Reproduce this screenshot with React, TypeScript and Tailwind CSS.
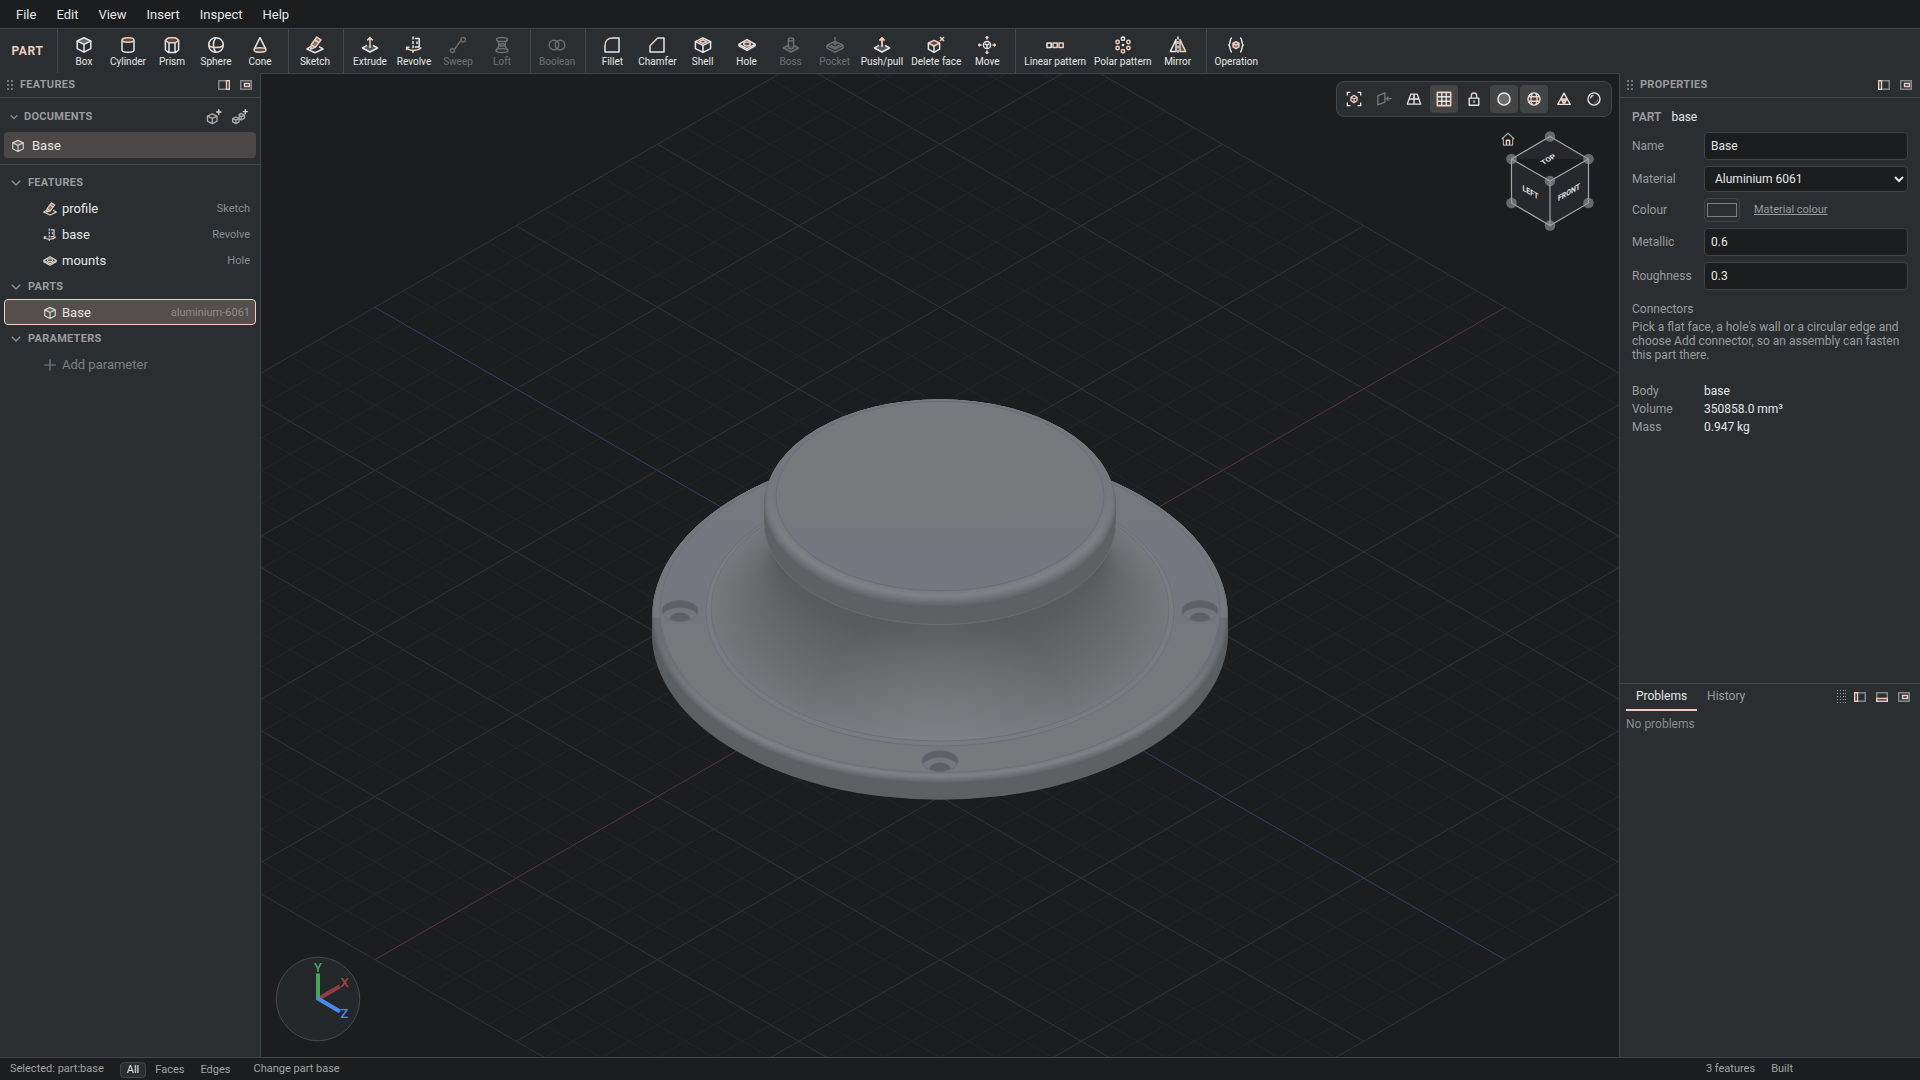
import type { ReactNode } from "react";

const ACCENT = "#efcdbe";

type IconProps = { size?: number; className?: string; children: ReactNode };

function Icon({ size = 18, className = "", children }: IconProps) {
  return (
    <svg
      width={size}
      height={size}
      viewBox="0 0 18 18"
      fill="none"
      stroke="currentColor"
      strokeWidth="1.5"
      strokeLinejoin="round"
      className={`shrink-0 ${className}`}
      aria-hidden="true"
    >
      {children}
    </svg>
  );
}

const cube = (
  <>
    <path d="M9 1.8 15.8 5 9 8.4 2.2 5Z" fill="#6d6765" />
    <path d="M2.2 5v7.6L9 16.2l6.8-3.6V5M9 8.4v7.8" />
  </>
);

const sketch = (
  <>
    <path d="M5 10.4 1 13 9 16.8l8-3.8-4-2.4" />
    <path d="M4.8 13 5.2 8.8 10.8 1l4.2 2.8-5.6 7.6Z" stroke={ACCENT} fill="#8a7468" />
    <path d="m5.4 8.8 4 2.6M9 4l4 2.6" stroke={ACCENT} />
  </>
);

const revolve = (
  <>
    <path d="M8 .5v17" strokeDasharray="3 1.4" />
    <path d="M9.8 2.4h4.4V11H9.8M12 5.4v2.6" />
    <path d="M2 11.4c1 3.8 10.6 4.2 14.4.2M1.6 14.2v-3h3" stroke={ACCENT} />
  </>
);

const hole = (
  <>
    <path d="M9 3.6 17 8.2v1.6l-8 4.6L1 9.8V8.2Z" />
    <path d="M1 8.4 9 12.6l8-4.2" />
    <ellipse cx="9" cy="8" rx="3.4" ry="1.9" stroke={ACCENT} fill="#5b4c45" />
  </>
);

const slab = <path d="M6 9.4 1.4 12 9 16l7.6-4L12 9.4" fill="#55585a" />;

const toolIcons: Record<string, ReactNode> = {
  Box: cube,
  Cylinder: (
    <>
      <path d="M3 4v10c0 3 12 3 12 0V4" />
      <ellipse cx="9" cy="4" rx="6" ry="2.2" stroke={ACCENT} fill="#5b4c45" />
    </>
  ),
  Prism: (
    <>
      <path d="M2.4 4v10l3 2.4h7.2l3-2.4V4M6 7v9M12 7v9" />
      <path d="M5.4 1.8h7.2l3 2.4-3 2.6H5.4l-3-2.6Z" stroke={ACCENT} fill="#5b4c45" />
    </>
  ),
  Sphere: (
    <>
      <circle cx="9" cy="9" r="7.3" />
      <path d="M9 1.8c-3.4 3-3.4 11.4 0 14.4" />
      <path d="M1.8 9c2 3.4 12.4 3.4 14.4 0" stroke={ACCENT} />
    </>
  ),
  Cone: (
    <>
      <path d="M3 13.6 9 1.6l6 12" />
      <ellipse cx="9" cy="14" rx="6" ry="2.2" stroke={ACCENT} fill="#5b4c45" />
    </>
  ),
  Sketch: sketch,
  Extrude: (
    <>
      {slab}
      <path d="M9 12V1.6M6.2 4.4 9 1.6l2.8 2.8" stroke={ACCENT} />
    </>
  ),
  Revolve: revolve,
  Sweep: (
    <>
      <path d="M4.6 13.6C8.4 12 8.4 6.4 12.6 4.6" />
      <circle cx="3.4" cy="14.4" r="2" stroke={ACCENT} />
      <circle cx="14.2" cy="3.8" r="2.2" stroke={ACCENT} />
    </>
  ),
  Loft: (
    <>
      <ellipse cx="9" cy="3.4" rx="5.4" ry="2" />
      <ellipse cx="9" cy="14.6" rx="6" ry="2" />
      <ellipse cx="9" cy="9" rx="2.8" ry="1.2" />
      <path d="M3.8 4c3 3 3 6.4-.6 10.2M14.2 4c-3 3-3 6.4.6 10.2" />
    </>
  ),
  Boolean: (
    <>
      <circle cx="6" cy="9" r="4.8" />
      <circle cx="12" cy="9" r="4.8" />
    </>
  ),
  Fillet: (
    <>
      <path d="M9 2h7v14H2V9.6" />
      <path d="M2 10c0-5 3-8 7.4-8" stroke={ACCENT} />
    </>
  ),
  Chamfer: (
    <>
      <path d="M9.4 2H16v14H2V9.6" />
      <path d="M2 9.8 9.6 2" stroke={ACCENT} />
    </>
  ),
  Shell: (
    <>
      <path d="M1.4 5.6v7L9 16.4l7.6-3.8v-7M9 9.4v7" />
      <path d="M9 1.8 16.6 5.6 9 9.4 1.4 5.6Z" />
      <path d="M9 3.8 12.8 5.6 9 7.4 5.2 5.6Z" stroke={ACCENT} fill="#5b4c45" />
    </>
  ),
  Hole: hole,
  Boss: (
    <>
      {slab}
      <path d="M6.4 3.6v7.6c0 1.6 5.2 1.6 5.2 0V3.6" />
      <ellipse cx="9" cy="3.4" rx="2.6" ry="1.5" />
    </>
  ),
  Pocket: (
    <>
      <path d="M9 5.4 17 9.2 9 13 1 9.2Z" />
      <path d="M1 9.4v2.8l8 4 8-4V9.4M4.6 9.2 9 11.4l4.4-2.2" />
      <path d="M9 1v7.4M7 6.6l2 2 2-2" stroke={ACCENT} />
    </>
  ),
  "Push/pull": (
    <>
      {slab}
      <path d="M9 11V3M6.4 4.6 9 2l2.6 2.6" stroke={ACCENT} strokeWidth="1.8" />
    </>
  ),
  "Delete face": (
    <>
      <path d="M7 4.4 12.6 7 7 10 1.4 7Z" stroke={ACCENT} fill="#5b4c45" />
      <path d="M1.4 7v6.2L7 16.4l5.6-3.2V7M7 10v6.4" />
      <path d="m13 1 4 4M17 1l-4 4" stroke={ACCENT} />
    </>
  ),
  Move: (
    <>
      <circle cx="9" cy="9" r="3.6" />
      <path d="M6.6 7.8 9 9l2.4-1.2M9 9v3" />
      <path
        d="M9 .6v3M9 14.4v3M.6 9h3M14.4 9h3M7.6 2 9 .6 10.4 2M7.6 16 9 17.4 10.4 16M2 7.6.6 9 2 10.4M16 7.6 17.4 9 16 10.4"
        stroke={ACCENT}
      />
    </>
  ),
  "Linear pattern": (
    <>
      <path d="M1 7h4.2v4.4H1z" />
      <path d="M7 7h4.2v4.4H7zM13 7h4.2v4.4H13z" stroke={ACCENT} />
    </>
  ),
  "Polar pattern": (
    <>
      <circle cx="9" cy="2.8" r="1.7" />
      <circle cx="3.6" cy="6" r="1.7" stroke={ACCENT} />
      <circle cx="14.4" cy="6" r="1.7" stroke={ACCENT} />
      <circle cx="3.6" cy="12" r="1.7" stroke={ACCENT} />
      <circle cx="14.4" cy="12" r="1.7" stroke={ACCENT} />
      <circle cx="9" cy="15.2" r="1.7" stroke={ACCENT} />
      <circle cx="9" cy="9" r=".6" />
    </>
  ),
  Mirror: (
    <>
      <path d="M7 3.6v11.8H1.4Z" />
      <path d="M11 3.6v11.8h5.6Z" stroke={ACCENT} fill="#5b4c45" />
      <path d="M9 .6v17" strokeDasharray="3 1.4" />
    </>
  ),
  Operation: (
    <>
      <path d="M5 2C2.4 2 3.8 8 1.8 9 3.8 10 2.4 16 5 16M13 2c2.6 0 1.2 6 3.2 7-2 1-.6 7-3.2 7" />
      <path
        d="M9 5.6 12 7.2v3.6l-3 1.8-3-1.8V7.2ZM6 7.2 9 9l3-1.8"
        stroke={ACCENT}
        fill="#8a7468"
      />
    </>
  ),
};

const toolGroups: string[][] = [
  ["Box", "Cylinder", "Prism", "Sphere", "Cone"],
  ["Sketch"],
  ["Extrude", "Revolve", "Sweep", "Loft"],
  ["Boolean"],
  ["Fillet", "Chamfer", "Shell", "Hole", "Boss", "Pocket", "Push/pull", "Delete face", "Move"],
  ["Linear pattern", "Polar pattern", "Mirror"],
  ["Operation"],
];

const disabledTools = ["Sweep", "Loft", "Boolean", "Boss", "Pocket"];

function MenuBar() {
  return (
    <nav className="flex h-[29px] shrink-0 items-center border-b border-[#434647] pt-0.5 pl-1.5">
      {["File", "Edit", "View", "Insert", "Inspect", "Help"].map((item) => (
        <button key={item} type="button" className="px-2.5 text-[13px] leading-5">
          {item}
        </button>
      ))}
    </nav>
  );
}

function Toolbar() {
  return (
    <div className="flex h-11 shrink-0 bg-[#2a2e30]">
      <div className="flex w-[58px] items-center justify-center border-r border-[#434647] pr-0.5 text-xs font-bold tracking-wider text-[#efcdbe]">
        PART
      </div>
      {toolGroups.map((group) => (
        <div
          key={group[0]}
          className="flex border-r border-[#434647] pr-1.5 pl-1 last:border-r-0"
        >
          {group.map((tool) => (
            <button
              key={tool}
              type="button"
              disabled={disabledTools.includes(tool)}
              className="flex min-w-11 flex-col items-center px-1 pt-[7px] disabled:opacity-35"
            >
              <Icon>{toolIcons[tool]}</Icon>
              <span className="text-[10px] leading-4 whitespace-nowrap">{tool}</span>
            </button>
          ))}
        </div>
      ))}
    </div>
  );
}

function Grip() {
  return (
    <svg width="6" height="10" viewBox="0 0 6 10" fill="#77797a" aria-hidden="true">
      {[0, 4, 8].map((y) => (
        <path key={y} d={`M0 ${y}h2v2H0zM4 ${y}h2v2H4z`} />
      ))}
    </svg>
  );
}

function DockIcon({ side }: { side: "left" | "right" | "bottom" | "float" }) {
  const insets = {
    left: "M.5 .5h3v9h-3z",
    right: "M8.5 .5h3v9h-3z",
    bottom: "M.5 6.5h11v3h-11z",
    float: "M4.5 3.5h5v3h-5z",
  };
  return (
    <svg width="12" height="10" viewBox="0 0 12 10" fill="none" aria-hidden="true">
      <path d="M.75 .75h10.5v8.5H.75z" stroke="#858889" strokeWidth="1.5" />
      <path d={insets[side]} stroke={ACCENT} strokeWidth="1.4" />
    </svg>
  );
}

function PanelHeader({ title, side }: { title: string; side: "left" | "right" }) {
  return (
    <header className="flex h-[25px] shrink-0 items-center border-b border-[#434647] pr-2 pl-[7px]">
      <Grip />
      <h2 className="ml-[7px] flex-1 pt-px text-[11px] font-bold tracking-wide text-[#9b9c9d]">
        {title}
      </h2>
      <div className="flex gap-2.5">
        <button type="button" aria-label="Dock panel">
          <DockIcon side={side} />
        </button>
        <button type="button" aria-label="Float panel">
          <DockIcon side="float" />
        </button>
      </div>
    </header>
  );
}

function Chevron({ size }: { size: number }) {
  return (
    <svg
      width={size}
      height={size}
      viewBox="0 0 10 10"
      fill="none"
      stroke="#8d8f90"
      strokeWidth="1.4"
      aria-hidden="true"
    >
      <path d="m.8 2.8 4.2 4.2 4.2-4.2" />
    </svg>
  );
}

function TreeHeading({ children }: { children: ReactNode }) {
  return (
    <button
      type="button"
      className="flex h-[26px] items-center gap-[7px] pt-0.5 pl-[11px] text-[11px] font-bold tracking-wide text-[#9b9c9d]"
    >
      <Chevron size={10} />
      {children}
    </button>
  );
}

type TreeRowProps = { icon: ReactNode; name: string; kind: string; selected?: boolean };

function TreeRow({ icon, name, kind, selected }: TreeRowProps) {
  return (
    <button
      type="button"
      className={`mx-1 flex h-[26px] items-center rounded border pt-0.5 pr-[5px] pl-[38px] ${
        selected ? "border-[#efcdbe] bg-[#544e4c]" : "border-transparent"
      }`}
    >
      <Icon size={14} className="text-[#d2d2d2]">
        {icon}
      </Icon>
      <span className="ml-[5px] flex-1 text-left text-[13px]">{name}</span>
      <span className="text-[11px] text-[#8b8d8e]">{kind}</span>
    </button>
  );
}

function FeaturesPanel() {
  return (
    <aside className="flex w-[260px] shrink-0 flex-col bg-[#2a2e30]">
      <PanelHeader title="FEATURES" side="right" />
      <section className="flex flex-col border-b border-[#434647] pt-1 pb-1.5">
        <div className="flex h-[30px] items-center pr-3 pl-2.5">
          <button
            type="button"
            className="flex flex-1 items-center gap-1.5 text-[11px] font-bold tracking-wide text-[#9b9c9d]"
          >
            <Chevron size={8} />
            DOCUMENTS
          </button>
          <div className="flex gap-2.5 text-[#a9abac]">
            <button type="button" aria-label="New part">
              <Icon size={16}>
                <path d="M7 5.4 12.4 8v5.6L7 16.6l-5.4-3V8ZM1.6 8 7 10.6 12.4 8M7 10.6v6" />
                <path d="M14.4 .4v6M11.4 3.4h6" stroke={ACCENT} />
              </Icon>
            </button>
            <button type="button" aria-label="New assembly">
              <Icon size={16}>
                <path d="M4.4 9 8 10.8v3.6l-3.6 2-3.6-2v-3.6ZM.8 10.8l3.6 1.8L8 10.8M4.4 12.6v3.8" />
                <path d="m10.4 5 3.6 1.8v3.6l-3.6 2L8 11V6.4ZM7.6 7l2.8 1.6L14 6.8M10.4 8.600v3.8" />
                <path d="M15 .2v5.6M12.2 3h5.6" stroke={ACCENT} />
              </Icon>
            </button>
          </div>
        </div>
        <button
          type="button"
          className="mx-1 flex h-[26px] items-center gap-[7px] rounded bg-[#4b4747] pt-px pl-[7px] text-[13px]"
        >
          <Icon size={14} className="text-[#d2d2d2]">
            {cube}
          </Icon>
          Base
        </button>
      </section>
      <section className="flex flex-col pt-1">
        <TreeHeading>FEATURES</TreeHeading>
        <TreeRow icon={sketch} name="profile" kind="Sketch" />
        <TreeRow icon={revolve} name="base" kind="Revolve" />
        <TreeRow icon={hole} name="mounts" kind="Hole" />
        <TreeHeading>PARTS</TreeHeading>
        <TreeRow icon={cube} name="Base" kind="aluminium-6061" selected />
        <TreeHeading>PARAMETERS</TreeHeading>
        <button
          type="button"
          className="flex h-[26px] items-center gap-[5px] pt-0.5 pl-[43px] text-[13px] text-[#7d8081]"
        >
          <Icon size={14}>
            <path d="M9 1.5v15M1.5 9h15" />
          </Icon>
          Add parameter
        </button>
      </section>
    </aside>
  );
}

// Isometric floor: 20 cells each way from the origin, a strong line every 5.
const CELL_X = 28.25;
const CELL_Y = 16.31;
const HALF = 20;

function isoPoint(u: number, v: number) {
  return [(u - v) * CELL_X, (u + v) * CELL_Y];
}

function gridPath(major: boolean) {
  let d = "";
  for (let i = -HALF; i <= HALF; i++) {
    if (i === 0 || (i % 5 === 0) !== major) continue;
    d += `M${isoPoint(i, -HALF)}L${isoPoint(i, HALF)}M${isoPoint(-HALF, i)}L${isoPoint(HALF, i)}`;
  }
  return d;
}

function mix(from: number[], to: number[], t: number) {
  return `rgb(${from.map((c, i) => Math.round(c + (to[i] - c) * t)).join(",")})`;
}

type Ring = { r: number; y: number; fill: string };

const SQUASH = 0.5774;
const FACE = [117, 121, 124];
const BRIGHT = [127, 131, 135];
const WALL = [93, 97, 100];

// A rounded edge, listed from its wall up to its flat face.
function roundedEdge(r: number, y: number, radius: number): Ring[] {
  const steps = 14;
  return Array.from({ length: steps + 1 }, (_, i) => {
    const t = i / steps;
    const a = (t * Math.PI) / 2;
    return {
      r: r - radius * (1 - Math.cos(a)),
      y: y - radius * 0.816 * Math.sin(a),
      fill: t < 0.6 ? mix(WALL, BRIGHT, t / 0.6) : mix(BRIGHT, FACE, (t - 0.6) / 0.4),
    };
  });
}

// The concave sweep from the flange up to the neck.
function flare(): Ring[] {
  const steps = 60;
  return Array.from({ length: steps + 1 }, (_, i) => {
    const t = i / steps;
    const a = (t * Math.PI) / 2;
    return {
      r: 229 - 64 * Math.sin(a),
      y: -24.4 - 67 * (1 - Math.cos(a)),
      fill: mix([117, 121, 125], [90, 91, 93], t),
    };
  });
}

function Rings({ rings }: { rings: Ring[] }) {
  return rings.map((ring, i) => (
    <ellipse key={i} cx="0" cy={ring.y} rx={ring.r} ry={ring.r * SQUASH} fill={ring.fill} />
  ));
}

function wallPath(r: number, top: number, bottom: number) {
  const ry = r * SQUASH;
  return `M${-r} ${top}V${bottom}A${r} ${ry} 0 0 0 ${r} ${bottom}V${top}Z`;
}

function MountHole({ x, y }: { x: number; y: number }) {
  return (
    <g transform={`translate(${x} ${y})`}>
      <ellipse rx="18.2" ry="10.5" fill="#5d6165" />
      <g clipPath="url(#bore)">
        <ellipse cy="7" rx="18.2" ry="10.5" fill="#74787c" stroke="#696d73" strokeWidth=".6" />
        <ellipse cy="7.5" rx="10.2" ry="6" fill="#5d6165" />
      </g>
      <ellipse rx="18.2" ry="10.5" stroke="#6a6d76" strokeWidth=".7" fill="none" />
    </g>
  );
}

function Scene() {
  return (
    <svg
      viewBox="-679 -559.5 1358 983"
      preserveAspectRatio="xMidYMid slice"
      className="block h-full w-full"
      role="img"
      aria-label="Model view"
    >
      <defs>
        <clipPath id="bore">
          <ellipse rx="18.2" ry="10.5" />
        </clipPath>
        <linearGradient id="topFace" gradientUnits="userSpaceOnUse" x1="0" y1="-235" x2="0" y2="-40">
          <stop offset="0" stopColor="#767a7c" />
          <stop offset=".6" stopColor="#75797c" />
          <stop offset=".7" stopColor="#74777f" />
          <stop offset="1" stopColor="#74777f" />
        </linearGradient>
        <linearGradient id="flange" gradientUnits="userSpaceOnUse" x1="0" y1="-160" x2="0" y2="140">
          <stop offset="0" stopColor="#75797d" />
          <stop offset=".2" stopColor="#74777f" />
          <stop offset=".46" stopColor="#74777f" />
          <stop offset=".54" stopColor="#75797c" />
          <stop offset="1" stopColor="#75797b" />
        </linearGradient>
        <linearGradient id="backFade" x1="0" x2="0" y1="0" y2="1">
          <stop offset="0" stopColor="#74787c" />
          <stop offset=".42" stopColor="#74787c" />
          <stop offset=".72" stopColor="#74787c" stopOpacity="0" />
        </linearGradient>
        <linearGradient id="sides" x1="0" x2="1" y1="0" y2="0">
          <stop offset="0" stopColor="#53575a" stopOpacity=".8" />
          <stop offset=".14" stopColor="#5d6164" stopOpacity="0" />
          <stop offset=".86" stopColor="#5d6164" stopOpacity="0" />
          <stop offset="1" stopColor="#53575a" stopOpacity=".8" />
        </linearGradient>
        <radialGradient id="sheen" gradientUnits="userSpaceOnUse" cx="0" cy="118" r="140">
          <stop offset="0" stopColor="#82868a" stopOpacity=".75" />
          <stop offset="1" stopColor="#82868a" stopOpacity="0" />
        </radialGradient>
      </defs>

      <path d={gridPath(false)} stroke="#242628" />
      <path d={gridPath(true)} stroke="#303335" />
      <path d={`M${isoPoint(0, -HALF)}L${isoPoint(0, HALF)}`} stroke="#553437" />
      <path d={`M${isoPoint(-HALF, 0)}L${isoPoint(HALF, 0)}`} stroke="#2b4266" />

      <path d={wallPath(288, -16, 0)} fill="#5d6164" />
      <Rings rings={roundedEdge(288, -16, 8)} />
      <ellipse cy="-20.5" rx="286" ry="165" fill="url(#backFade)" />
      <path d={wallPath(288, -16, 0)} fill="url(#sides)" opacity=".5" />
      <ellipse cy="-22.5" rx="280" ry="161.7" fill="url(#flange)" stroke="#6a6d7a" strokeWidth=".8" />
      <ellipse cy="-22.5" rx="234" ry="135" fill="#787c80" stroke="#696c78" strokeWidth=".8" />
      <Rings rings={flare()} />
      <ellipse cy="-24.4" rx="229" ry="132" fill="url(#sheen)" stroke="#696c78" strokeWidth=".8" />

      <MountHole x={-260} y={-22.5} />
      <MountHole x={260} y={-22.5} />
      <MountHole x={0} y={127.5} />

      <path d={wallPath(176, -127.5, -110.5)} fill="#5d6164" />
      <Rings rings={roundedEdge(176, -127.5, 12)} />
      <ellipse cy="-134" rx="173" ry="100" fill="url(#backFade)" />
      <path
        d="M-176 -110.5A176 101.6 0 0 0 176 -110.5"
        fill="none"
        stroke="#6b7077"
        strokeWidth=".8"
      />
      <ellipse cy="-137.4" rx="164" ry="94.7" fill="url(#topFace)" stroke="#666a78" strokeWidth=".8" />
    </svg>
  );
}

const viewTools: { label: string; active?: boolean; dim?: boolean; icon: ReactNode }[] = [
  {
    label: "Zoom to fit",
    icon: (
      <>
        <path d="M1.5 5V1.5H5M13 1.5h3.5V5M16.5 13v3.5H13M5 16.5H1.5V13" />
        <path d="m9 5 3.4 2v4L9 13l-3.4-2V7ZM5.6 7 9 9l3.4-2M9 9v4" stroke={ACCENT} />
      </>
    ),
  },
  {
    label: "View normal to",
    dim: true,
    icon: (
      <>
        <path d="M2 5.4 10 2v10.6L2 15.6Z" />
        <path d="M17.4 8.6H12M14 6.4 11.8 8.6 14 10.8" />
      </>
    ),
  },
  {
    label: "Perspective",
    icon: (
      <>
        <path d="M5.4 3.5 1.5 14.8h15L12.6 3.5M3.8 9h10.4M9 3.5v11.3" />
        <path d="M5 3.5h8M9 3.5V9" stroke={ACCENT} />
      </>
    ),
  },
  {
    label: "Grid",
    active: true,
    icon: (
      <>
        <path d="M1.5 1.5h15v15h-15z" stroke={ACCENT} strokeWidth="1.8" />
        <path d="M6.5 2v14M11.5 2v14M2 6.5h14M2 11.5h14" />
      </>
    ),
  },
  {
    label: "Lock rotation",
    icon: (
      <>
        <path d="M3.6 8h10.8v8H3.6zM9 10.6v2.6" />
        <path d="M6 8V5.4c0-4.2 6-4.2 6 0V8" stroke={ACCENT} />
      </>
    ),
  },
  {
    label: "Shaded",
    active: true,
    icon: <circle cx="9" cy="9" r="6.8" fill="#6e6b69" strokeWidth="1.7" />,
  },
  {
    label: "Edges",
    active: true,
    icon: (
      <>
        <circle cx="9" cy="9" r="6.8" />
        <path
          d="M2.5 6.5h13M2.5 11.5h13M7 2.4c-1.8 4-1.8 9.2 0 13.2M11 2.4c1.8 4 1.8 9.2 0 13.2"
          stroke={ACCENT}
        />
      </>
    ),
  },
  {
    label: "Mesh",
    icon: (
      <>
        <path d="M9 2.4 16 15H2Z" />
        <path d="M5.6 9h6.8L9 15ZM5.6 9 9 11l3.4-2M9 11v4" stroke={ACCENT} />
      </>
    ),
  },
  {
    label: "Rendered",
    icon: (
      <>
        <circle cx="9" cy="9" r="6.8" />
        <path d="M5 8.4C5.4 6.4 6.6 5.2 8.4 5" stroke={ACCENT} />
        <path d="M13.4 8.6c0 2.6-1.8 4.6-4.6 4.8" stroke="#5b5e60" />
      </>
    ),
  },
];

const cubeCorners = [
  [0, -44.5],
  [-38.5, -22],
  [38.5, -22],
  [0, 0],
  [-38.5, 22],
  [38.5, 22],
  [0, 44.5],
];

function ViewCube() {
  return (
    <svg
      width="90"
      height="102"
      viewBox="-45 -51 90 102"
      className="absolute top-14 right-6"
      role="img"
      aria-label="View cube"
    >
      <path
        d="M0-44.5 38.5-22V22L0 44.5-38.5 22V-22ZM-38.5-22 0 0 38.5-22M0 0V44.5"
        fill="#26282b"
        stroke="#a3a5a6"
        strokeWidth="1.2"
      />
      {cubeCorners.map(([x, y]) => (
        <circle key={`${x},${y}`} cx={x} cy={y} r="5.3" fill="#9a9c9d" fillOpacity=".6" />
      ))}
      <g fill="#e2e2e2" fontSize="8" fontWeight="700" textAnchor="middle">
        <text transform="matrix(.866 -.5 .6 .6 0 -20)">TOP</text>
        <text transform="matrix(.866 .5 0 1 -19.5 13)" y="1">LEFT</text>
        <text transform="matrix(.866 -.5 0 1 19 13)" y="1">FRONT</text>
      </g>
    </svg>
  );
}

function AxisTriad() {
  return (
    <svg
      width="86"
      height="86"
      viewBox="-43 -43 86 86"
      className="absolute bottom-[15px] left-3.5"
      role="img"
      aria-label="Axes"
    >
      <circle r="41.8" fill="#24282b" stroke="#4a4948" />
      <g strokeWidth="4">
        <path d="M0 0 22-12.7" stroke="#913d41" />
        <path d="M0 1V-25.5" stroke="#4aa45b" />
        <path d="M-1-1 22 12.5" stroke="#488bec" />
      </g>
      <g fontSize="13" fontWeight="500" textAnchor="middle">
        <text y="-27" fill="#4aa45b">Y</text>
        <text x="26.5" y="-12" fill="#a4434a">X</text>
        <text x="26.5" y="19" fill="#488bec">Z</text>
      </g>
    </svg>
  );
}

function Viewport() {
  return (
    <main className="relative min-w-0 flex-1 overflow-hidden border border-b-0 border-[#434647]">
      <div className="absolute inset-0">
        <Scene />
      </div>
      <div className="absolute top-[7px] right-[7px] flex gap-0.5 rounded-lg border border-[#434647] bg-[#2a2e30] p-[3px]">
        {viewTools.map((tool) => (
          <button
            key={tool.label}
            type="button"
            aria-label={tool.label}
            className={`flex size-7 items-center justify-center rounded ${
              tool.active ? "bg-[#434445]" : ""
            } ${tool.dim ? "opacity-40" : ""}`}
          >
            <Icon size={16}>{tool.icon}</Icon>
          </button>
        ))}
      </div>
      <button
        type="button"
        aria-label="Home view"
        className="absolute top-[58px] right-[104px] text-[#a9abac]"
      >
        <Icon size={14}>
          <path d="M1 9 9 1.6 17 9M3 8v8.8h12V8" />
          <path d="M7 16.4V10.6h4v5.8" stroke={ACCENT} strokeWidth="1.8" />
        </Icon>
      </button>
      <ViewCube />
      <AxisTriad />
    </main>
  );
}

const fieldBox = "w-full rounded border border-[#3f4445] bg-[#1b1d1e] text-xs text-[#e6e6e6]";

function Field({ id, label, children }: { id: string; label: string; children: ReactNode }) {
  return (
    <div className="grid grid-cols-[72px_1fr] items-center">
      <label htmlFor={id}>{label}</label>
      <div className="flex items-center">{children}</div>
    </div>
  );
}

function PropertiesPanel() {
  const facts = [
    ["Body", "base"],
    ["Volume", "350858.0 mm³"],
    ["Mass", "0.947 kg"],
  ];
  return (
    <section className="flex min-h-0 flex-1 flex-col">
      <PanelHeader title="PROPERTIES" side="left" />
      <div className="px-3 pt-3 text-xs leading-[14px] text-[#9b9c9d]">
        <p className="mb-2 flex gap-2.5">
          <span className="font-semibold">PART</span>
          <span className="text-[#e6e6e6]">base</span>
        </p>
        <div className="flex flex-col gap-1.5">
          <Field id="name" label="Name">
            <input id="name" defaultValue="Base" className={`${fieldBox} h-7 px-1.5`} />
          </Field>
          <Field id="material" label="Material">
            <select id="material" className={`${fieldBox} h-[26px] pl-1.5`}>
              <option>Aluminium 6061</option>
            </select>
          </Field>
          <Field id="colour" label="Colour">
            <button
              id="colour"
              type="button"
              className="mr-3.5 h-6 w-9 rounded border border-[#3f4445] px-0.5 py-1"
            >
              <span className="block h-full border border-[#7c7f80]" />
            </button>
            <a href="#material" className="text-[11px] underline">
              Material colour
            </a>
          </Field>
          <Field id="metallic" label="Metallic">
            <input id="metallic" defaultValue="0.6" className={`${fieldBox} h-7 px-1.5`} />
          </Field>
          <Field id="roughness" label="Roughness">
            <input id="roughness" defaultValue="0.3" className={`${fieldBox} h-7 px-1.5`} />
          </Field>
        </div>
        <h3 className="mt-3">Connectors</h3>
        <p className="mt-1">
          Pick a flat face, a hole's wall or a circular edge and choose Add connector, so an
          assembly can fasten this part there.
        </p>
        <dl className="mt-[22px] grid grid-cols-[72px_1fr] gap-y-1">
          {facts.map(([term, value]) => (
            <div key={term} className="contents">
              <dt>{term}</dt>
              <dd className="text-[#e6e6e6]">{value}</dd>
            </div>
          ))}
        </dl>
      </div>
    </section>
  );
}

function ProblemsPanel() {
  return (
    <section className="h-[374px] shrink-0 border-t border-[#434647] text-xs text-[#9b9c9d]">
      <div className="flex h-[27px] items-center pr-2.5 pl-1.5">
        <button
          type="button"
          className="h-full border-b-2 border-[#efcdbe] px-2.5 pb-0.5 text-[#e6e6e6]"
        >
          Problems
        </button>
        <button type="button" className="h-full border-b-2 border-transparent px-2.5 pb-0.5">
          History
        </button>
        <div className="ml-auto flex items-center gap-2.5 pb-0.5">
          <svg
            width="9"
            height="13"
            viewBox="0 0 9 13"
            fill="#9b9c9d"
            className="-mr-0.5"
            aria-hidden="true"
          >
            {[0, 3, 6, 9, 12].map((y) => (
              <path key={y} d={`M0 ${y}h1v1H0zM3 ${y}h1v1H3zM6 ${y}h1v1H6zM8 ${y}h1v1H8z`} />
            ))}
          </svg>
          <button type="button" aria-label="Dock left">
            <DockIcon side="left" />
          </button>
          <button type="button" aria-label="Dock bottom">
            <DockIcon side="bottom" />
          </button>
          <button type="button" aria-label="Float panel">
            <DockIcon side="float" />
          </button>
        </div>
      </div>
      <p className="px-1.5 pt-1 leading-[18px] text-[#8b8d8e]">No problems</p>
    </section>
  );
}

function StatusBar() {
  return (
    <footer className="flex h-[23px] shrink-0 items-center border-t border-[#434647] pt-px pr-[127px] pl-2.5 text-[11px] text-[#a3a4a5]">
      <span>Selected: part:base</span>
      <div className="ml-4 flex gap-0.5 leading-[14px]">
        <button
          type="button"
          className="rounded border border-[#434647] bg-[#2a2e30] px-1.5 text-[#e6e6e6]"
        >
          All
        </button>
        <button type="button" className="border border-transparent px-1.5">
          Faces
        </button>
        <button type="button" className="border border-transparent px-1.5">
          Edges
        </button>
      </div>
      <span className="ml-4">Change part base</span>
      <span className="ml-auto">3 features</span>
      <span className="ml-4">Built</span>
    </footer>
  );
}

export default function App() {
  return (
    <div className="flex h-screen flex-col overflow-hidden bg-[#1b1d1e] font-[Roboto,sans-serif] text-[#e6e6e6]">
      <MenuBar />
      <Toolbar />
      <div className="flex min-h-0 flex-1">
        <FeaturesPanel />
        <Viewport />
        <aside className="flex w-[300px] shrink-0 flex-col bg-[#2a2e30]">
          <PropertiesPanel />
          <ProblemsPanel />
        </aside>
      </div>
      <StatusBar />
    </div>
  );
}
